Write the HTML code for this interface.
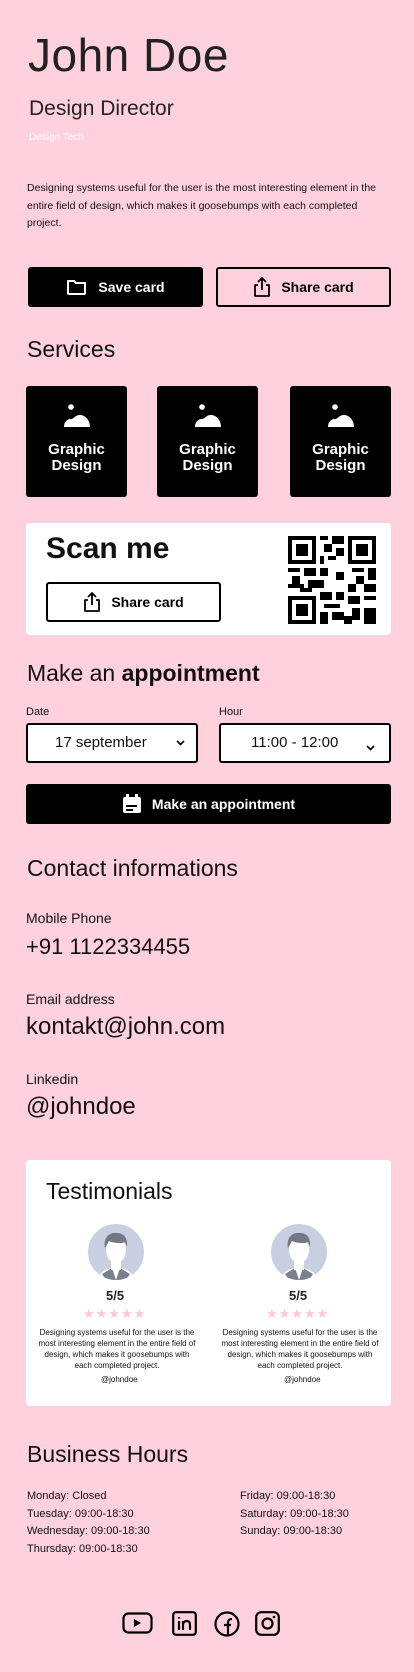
<!DOCTYPE html>
<html><head><meta charset="utf-8"><style>
*{margin:0;padding:0;box-sizing:border-box}
body{width:414px;height:1672px;background:#ffd1dc;font-family:"Liberation Sans",sans-serif;color:#111;position:relative;overflow:hidden}
.a{position:absolute;white-space:nowrap}
.btn{position:absolute;border-radius:3px;display:flex;align-items:center;justify-content:center;font-weight:bold;font-size:14px;gap:10px}
.blk{background:#000;color:#fff}
.out{border:2px solid #000;color:#000}
.svc{position:absolute;top:386px;width:101px;height:111px;background:#000;border-radius:3px;color:#fff;text-align:center;font-weight:bold;font-size:15px;line-height:16px}
.svc svg{display:block;margin:18px auto 14px}
.sel{position:absolute;top:723px;height:40px;background:#fff;border:2px solid #000;border-radius:3px;font-size:15px}
.lbl{font-size:14px}
.t{position:absolute;width:160px;text-align:center;font-size:8px;line-height:11px;color:#111}
.hrs{font-size:11px;line-height:17.5px}
</style></head><body>
<div class="a" style="left:28px;top:28px;font-size:46px;color:#222;letter-spacing:0.5px">John Doe</div>
<div class="a" style="left:29px;top:97px;font-size:21px;color:#222">Design Director</div>
<div class="a" style="left:29px;top:132px;font-size:10px;color:#fff">Design Tech</div>
<div class="a" style="left:27px;top:180px;font-size:10.5px;line-height:17.5px;white-space:normal;width:352px">Designing systems useful for the user is the most interesting element in the entire field of design, which makes it goosebumps with each completed project.</div>

<div class="btn blk" style="left:28px;top:267px;width:175px;height:40px"><svg width="22" height="18" viewBox="0 0 22 18"><path d="M2 3h6l2 2h9v10a1 1 0 0 1-1 1H3a1 1 0 0 1-1-1z" fill="none" stroke="#fff" stroke-width="2" stroke-linejoin="round"/></svg>Save card</div>
<div class="btn out" style="left:216px;top:267px;width:175px;height:40px"><svg width="18" height="22" viewBox="0 0 18 22"><path d="M5 9H2v11h14V9h-3M9 14V2M5 6l4-4 4 4" fill="none" stroke="#000" stroke-width="1.8" stroke-linejoin="round"/></svg>Share card</div>

<div class="a" style="left:27px;top:336px;font-size:23px">Services</div>
<div class="svc" style="left:26px"><svg width="28" height="24" viewBox="0 0 28 24"><circle cx="8" cy="3" r="2.8" fill="#fff"/><path d="M1 23c0-5 3-8 7-8 3 0 4-4 9-4s10 5 10 12z" fill="#fff"/></svg>Graphic<br>Design</div>
<div class="svc" style="left:157px"><svg width="28" height="24" viewBox="0 0 28 24"><circle cx="8" cy="3" r="2.8" fill="#fff"/><path d="M1 23c0-5 3-8 7-8 3 0 4-4 9-4s10 5 10 12z" fill="#fff"/></svg>Graphic<br>Design</div>
<div class="svc" style="left:290px"><svg width="28" height="24" viewBox="0 0 28 24"><circle cx="8" cy="3" r="2.8" fill="#fff"/><path d="M1 23c0-5 3-8 7-8 3 0 4-4 9-4s10 5 10 12z" fill="#fff"/></svg>Graphic<br>Design</div>

<div class="a" style="left:26px;top:523px;width:365px;height:112px;background:#fff;border-radius:4px"></div>
<div class="a" style="left:46px;top:532px;font-size:30px;font-weight:bold">Scan me</div>
<div class="btn out" style="left:46px;top:582px;width:175px;height:40px"><svg width="18" height="22" viewBox="0 0 18 22"><path d="M5 9H2v11h14V9h-3M9 14V2M5 6l4-4 4 4" fill="none" stroke="#000" stroke-width="1.8" stroke-linejoin="round"/></svg>Share card</div>
<svg class="a" style="left:288px;top:536px" width="88" height="88" viewBox="0 0 22 22" shape-rendering="crispEdges">
<g fill="#000">
<path d="M0 0h7v7H0zM15 0h7v7h-7zM0 15h7v7H0z"/>
</g><g fill="#fff"><path d="M1 1h5v5H1zM16 1h5v5h-5zM1 16h5v5H1z"/></g>
<g fill="#000"><path d="M2 2h3v3H2zM17 2h3v3h-3zM2 17h3v3H2z"/>
<path d="M8 0h2v1H8zM11 0h3v2h-3zM9 2h2v2H9zM12 3h2v2h-2zM8 5h1v2H8zM10 5h2v1h-2zM0 8h3v1H0zM4 8h3v2H4zM1 10h2v2H1zM0 12h4v1H0zM5 11h3v2H5zM3 13h3v1H3zM8 8h2v2H8zM16 8h3v1h-3zM20 8h2v3h-2zM17 10h2v2h-2zM15 12h2v2h-2zM19 12h3v2h-3zM8 14h3v2H8zM12 14h2v2h-2zM9 17h4v1H9zM8 19h2v3H8zM11 19h3v2h-3zM15 15h3v2h-3zM19 15h3v1h-3zM16 18h2v3h-2zM19 18h3v4h-3zM14 20h2v2h-2zM8 11h1v2H8zM12 9h2v2h-2z"/></g>
</svg>

<div class="a" style="left:27px;top:660px;font-size:23px">Make an <b style="font-weight:600">appointment</b></div>
<div class="a" style="left:26px;top:706px;font-size:11px">Date</div>
<div class="a" style="left:219px;top:706px;font-size:11px">Hour</div>
<div class="sel" style="left:26px;width:172px"><span class="a" style="left:27px;top:9px">17 september</span><svg class="a" style="left:148px;top:15px" width="9" height="6" viewBox="0 0 9 6"><path d="M1 1l3.5 3.5L8 1" fill="none" stroke="#000" stroke-width="1.6"/></svg></div>
<div class="sel" style="left:219px;width:172px"><span class="a" style="left:30px;top:9px">11:00 - 12:00</span><svg class="a" style="left:145px;top:20px" width="9" height="6" viewBox="0 0 9 6"><path d="M1 1l3.5 3.5L8 1" fill="none" stroke="#000" stroke-width="1.6"/></svg></div>
<div class="btn blk" style="left:26px;top:784px;width:365px;height:40px"><svg width="20" height="20" viewBox="0 0 20 20"><rect x="1" y="3" width="18" height="16" rx="2" fill="#fff"/><rect x="4" y="0" width="3" height="4" fill="#fff"/><rect x="13" y="0" width="3" height="4" fill="#fff"/><rect x="4" y="11" width="11" height="2" fill="#000"/><rect x="4" y="15" width="7" height="2" fill="#000"/></svg>Make an appointment</div>

<div class="a" style="left:27px;top:855px;font-size:23px">Contact informations</div>
<div class="a lbl" style="left:26px;top:910px">Mobile Phone</div>
<div class="a" style="left:26px;top:934px;font-size:22px">+91 1122334455</div>
<div class="a lbl" style="left:26px;top:991px">Email address</div>
<div class="a" style="left:26px;top:1013px;font-size:24px">kontakt@john.com</div>
<div class="a lbl" style="left:26px;top:1071px">Linkedin</div>
<div class="a" style="left:26px;top:1093px;font-size:24px">@johndoe</div>

<div class="a" style="left:26px;top:1160px;width:365px;height:246px;background:#fff;border-radius:4px"></div>
<div class="a" style="left:46px;top:1178px;font-size:23px">Testimonials</div>
<svg class="a" style="left:88px;top:1224px" width="56" height="56" viewBox="0 0 56 56"><defs><clipPath id="c1"><circle cx="28" cy="28" r="28"/></clipPath></defs><g clip-path="url(#c1)"><rect width="56" height="56" fill="#c8cfe0"/><path d="M10 56c2-10 10-12 18-12s16 2 18 12z" fill="#fff"/><path d="M14 50l10-6 4 12-10 0z" fill="#7a7f8c"/><path d="M42 50l-10-6-4 12 10 0z" fill="#7a7f8c"/><rect x="23" y="34" width="10" height="12" fill="#fff"/><ellipse cx="28" cy="26" rx="10" ry="13" fill="#fff"/><path d="M17 24c-2-10 4-16 12-15 6 0 11 4 10 14l-2-5c-4 2-12 1-16-1z" fill="#727884"/></g></svg>
<svg class="a" style="left:271px;top:1224px" width="56" height="56" viewBox="0 0 56 56"><defs><clipPath id="c2"><circle cx="28" cy="28" r="28"/></clipPath></defs><g clip-path="url(#c2)"><rect width="56" height="56" fill="#c8cfe0"/><path d="M10 56c2-10 10-12 18-12s16 2 18 12z" fill="#fff"/><path d="M14 50l10-6 4 12-10 0z" fill="#7a7f8c"/><path d="M42 50l-10-6-4 12 10 0z" fill="#7a7f8c"/><rect x="23" y="34" width="10" height="12" fill="#fff"/><ellipse cx="28" cy="26" rx="10" ry="13" fill="#fff"/><path d="M17 24c-2-10 4-16 12-15 6 0 11 4 10 14l-2-5c-4 2-12 1-16-1z" fill="#727884"/></g></svg>
<div class="a" style="left:106px;top:1288px;font-size:13px;font-weight:bold;color:#222">5/5</div>
<div class="a" style="left:289px;top:1288px;font-size:13px;font-weight:bold;color:#222">5/5</div>
<div class="a" style="left:83px;top:1306px;font-size:13px;color:#ffc6d4;letter-spacing:1px">★★★★★</div>
<div class="a" style="left:266px;top:1306px;font-size:13px;color:#ffc6d4;letter-spacing:1px">★★★★★</div>
<div class="t" style="left:37px;top:1327px">Designing systems useful for the user is the most interesting element in the entire field of design, which makes it goosebumps with each completed project.</div>
<div class="t" style="left:220px;top:1327px">Designing systems useful for the user is the most interesting element in the entire field of design, which makes it goosebumps with each completed project.</div>
<div class="a" style="left:101px;top:1375px;font-size:8px">@johndoe</div>
<div class="a" style="left:284px;top:1375px;font-size:8px">@johndoe</div>

<div class="a" style="left:27px;top:1441px;font-size:23px">Business Hours</div>
<div class="a hrs" style="left:27px;top:1488px">Monday: Closed<br>Tuesday: 09:00-18:30<br>Wednesday: 09:00-18:30<br>Thursday: 09:00-18:30</div>
<div class="a hrs" style="left:240px;top:1488px">Friday: 09:00-18:30<br>Saturday: 09:00-18:30<br>Sunday: 09:00-18:30</div>

<svg class="a" style="left:122px;top:1612px" width="31" height="22" viewBox="0 0 31 22"><rect x="1.5" y="1.5" width="28" height="19" rx="5" fill="none" stroke="#000" stroke-width="2.2"/><path d="M12 7v8l7-4z" fill="#000"/></svg>
<svg class="a" style="left:172px;top:1611px" width="25" height="25" viewBox="0 0 25 25"><rect x="1.2" y="1.2" width="22.6" height="22.6" rx="3" fill="none" stroke="#000" stroke-width="2.2"/><path d="M7 10v9M7 6v1.5M11 19v-9M11 14c0-3 2-4 4-4s3 1.5 3 4v5" fill="none" stroke="#000" stroke-width="2.2"/></svg>
<svg class="a" style="left:214px;top:1611px" width="26" height="26" viewBox="0 0 26 26"><circle cx="13" cy="13" r="11.5" fill="none" stroke="#000" stroke-width="2.2"/><path d="M14 25V12c0-3 1-4 4-4M10 14h7" fill="none" stroke="#000" stroke-width="2.2"/></svg>
<svg class="a" style="left:255px;top:1611px" width="25" height="25" viewBox="0 0 25 25"><rect x="1.2" y="1.2" width="22.6" height="22.6" rx="5" fill="none" stroke="#000" stroke-width="2.2"/><circle cx="12.5" cy="12.5" r="5" fill="none" stroke="#000" stroke-width="2.2"/><circle cx="19" cy="6" r="1.3" fill="#000"/></svg>
</body></html>
